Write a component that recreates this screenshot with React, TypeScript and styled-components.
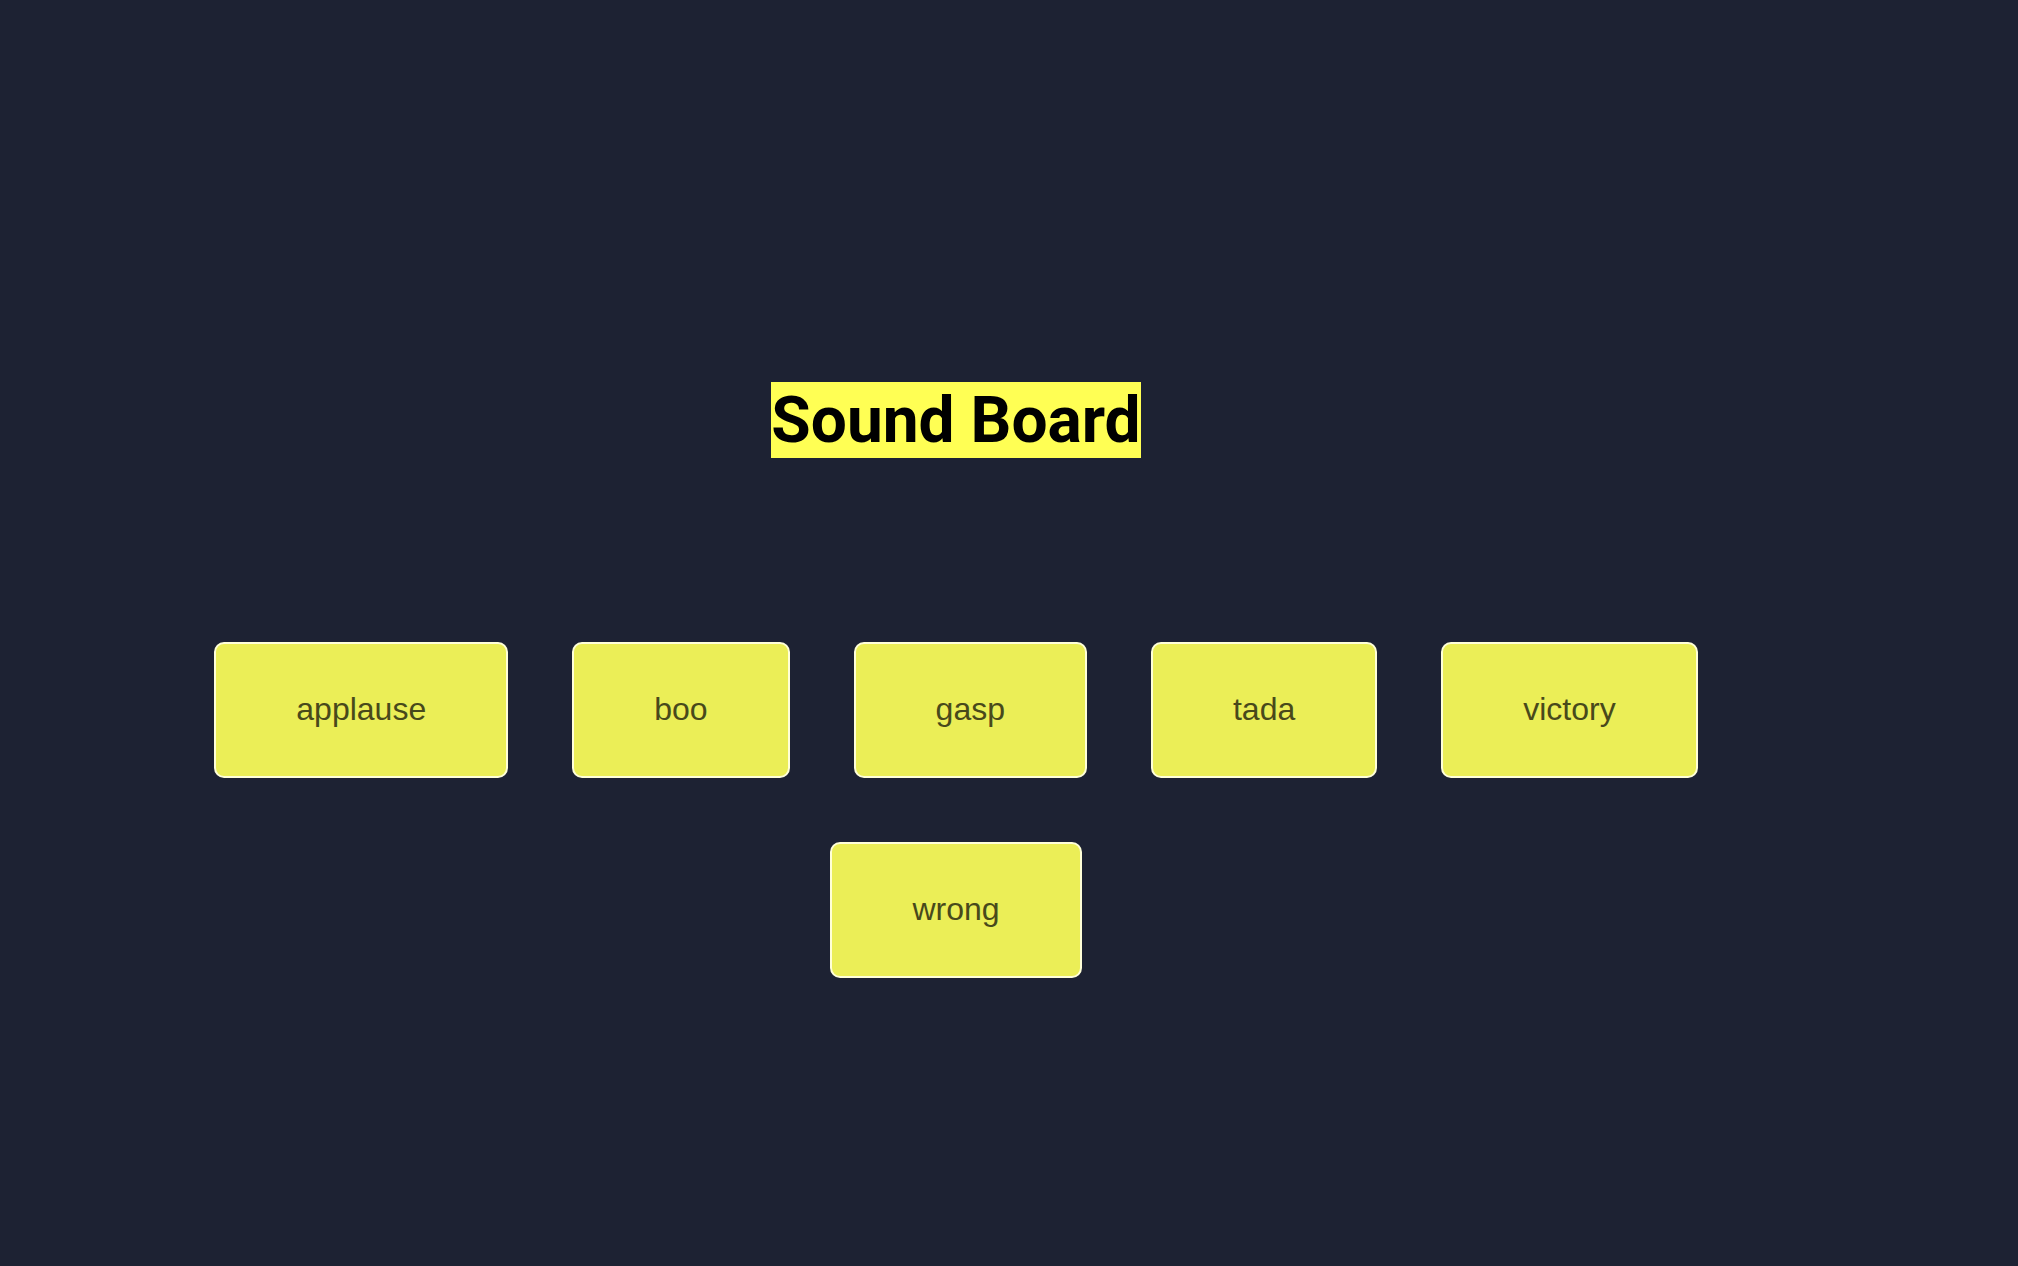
import React from "react";
import styled, { createGlobalStyle } from "styled-components";

const GlobalStyle = createGlobalStyle`
  * { box-sizing: border-box; }
  body {
    margin: 0;
    background: #1d2233;
    font-family: Roboto, sans-serif;
  }
`;

const Page = styled.main`
  min-height: 100vh;
  display: flex;
  flex-direction: column;
  align-items: center;
  justify-content: center;
  padding: 94px 170px 0 64px;
`;

const Title = styled.h1`
  margin: 0 0 184px;
  padding-top: 2px;
  background: #ffff54;
  color: #000;
  font-size: 64px;
  font-weight: 700;
  line-height: 74px;
`;

const Buttons = styled.div`
  display: flex;
  flex-wrap: wrap;
  justify-content: center;
  gap: 64px;
`;

const SoundButton = styled.button`
  padding: 47px 80px 49px;
  border: 2px solid #ffffd8;
  border-radius: 10px;
  background: #ebee57;
  color: #48491b;
  font-family: "Liberation Sans", Arial, sans-serif;
  font-size: 32px;
  line-height: 36px;
  cursor: pointer;
`;

const sounds = ["applause", "boo", "gasp", "tada", "victory", "wrong"];

export default function App() {
  return (
    <>
      <GlobalStyle />
      <Page>
        <Title>Sound Board</Title>
        <Buttons>
          {sounds.map((sound) => (
            <SoundButton key={sound} type="button">
              {sound}
            </SoundButton>
          ))}
        </Buttons>
      </Page>
    </>
  );
}
